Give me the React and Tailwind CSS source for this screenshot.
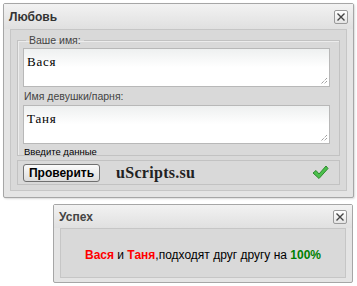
export default function App() {
  const sans = { fontFamily: '"Liberation Sans", Arial, sans-serif' };
  const Close = () => (
    <div className="w-[14px] h-[14px] border border-[#9a9a9a] rounded-[2px] bg-gradient-to-b from-[#ffffff] to-[#e4e4e4] flex items-center justify-center">
      <svg width="10" height="10" viewBox="0 0 10 10">
        <path d="M1.5 1.5 L8.5 8.5 M8.5 1.5 L1.5 8.5" stroke="#444" strokeWidth="1.4" />
      </svg>
    </div>
  );
  const Resize = () => (
    <svg width="9" height="9" viewBox="0 0 9 9" className="absolute right-[1px] bottom-[1px]">
      <path d="M8 2 L2 8 M8 5 L5 8" stroke="#777" strokeWidth="1" strokeDasharray="1 1" />
    </svg>
  );
  const mono = { fontFamily: '"Liberation Serif", "Times New Roman", serif' };
  return (
    <div className="w-[357px] h-[286px] bg-white overflow-hidden flex flex-col" style={sans}>
      <div className="ml-[3px] mt-[3px] w-[351px] h-[195px] border border-[#a6a6a6] rounded-[2px] bg-[#e4e4e4] flex flex-col shadow-[1px_1px_2px_rgba(0,0,0,0.15)]">
        <div className="h-[25px] flex items-center justify-between pl-[5px] pr-[5px] bg-gradient-to-b from-[#f2f2f2] to-[#e0e0e0]">
          <span className="text-[12px] font-bold text-[#333]">Любовь</span>
          <Close />
        </div>
        <div className="mx-[6px] h-[162px] border border-[#c6c6c6] bg-[#d9d9d9] flex flex-col px-[6px] pt-[4px]">
          <fieldset className="border border-[#c2c2c2] shadow-[inset_1px_1px_0_#ececec] px-[5px] pb-[2px] h-[122px]">
            <legend className="text-[10.5px] text-[#444] px-[3px] ml-[3px] leading-[12px]">Ваше имя:</legend>
            <div className="relative mt-[2px] w-[307px] h-[39px] border border-[#b8b8b8] bg-gradient-to-b from-[#eef0f0] via-[#ffffff] to-[#ffffff] to-30%">
              <div className="pl-[3px] pt-[3px] text-[13px] text-black tracking-[0.8px]" style={mono}>Вася</div>
              <Resize />
            </div>
            <div className="text-[10.5px] text-[#444] mt-[3px] leading-[13px] pl-[1px]">Имя девушки/парня:</div>
            <div className="relative mt-[2px] w-[307px] h-[39px] border border-[#b8b8b8] bg-gradient-to-b from-[#eef0f0] via-[#ffffff] to-[#ffffff] to-30%">
              <div className="pl-[3px] pt-[3px] text-[13px] text-black tracking-[0.8px]" style={mono}>Таня</div>
              <Resize />
            </div>
            <div className="text-[9.5px] text-black leading-[13px] mt-[1px] pl-[1px]">Введите данные</div>
          </fieldset>
          <div className="mt-[4px] h-[25px] border border-[#c2c2c2] flex items-center pl-[5px] pr-[10px]">
            <div className="w-[77px] h-[18px] border border-[#707070] rounded-[3px] bg-gradient-to-b from-[#fbfbfb] to-[#dcdcdc] flex items-center justify-center text-[12px] font-bold text-black">Проверить</div>
            <div className="ml-[16px] text-[16px] font-bold text-[#222] tracking-[0.3px]" style={{ fontFamily: '"Liberation Serif", "Times New Roman", serif' }}>uScripts.su</div>
            <div className="flex-1" />
            <svg width="17" height="15" viewBox="0 0 17 15">
              <path d="M1 8 L4 5.5 L7 9 L14 1 L16 3.5 L7 13.5 Z" fill="#4cc04c" stroke="#2e8b2e" strokeWidth="1" strokeLinejoin="round" />
            </svg>
          </div>
        </div>
      </div>
      <div className="ml-[53px] mt-[6px] w-[300px] h-[79px] border border-[#a6a6a6] rounded-[2px] bg-[#e4e4e4] flex flex-col">
        <div className="h-[23px] flex items-center justify-between pl-[5px] pr-[5px] bg-gradient-to-b from-[#f2f2f2] to-[#e0e0e0]">
          <span className="text-[12px] font-bold text-[#444]">Успех</span>
          <Close />
        </div>
        <div className="mx-[6px] h-[50px] border border-[#c6c6c6] bg-[#d9d9d9] flex items-center justify-center text-[12px] text-black">
          <span className="mt-[4px]">
            <b className="text-[#ff0000]">Вася</b> и <b className="text-[#ff0000]">Таня</b>,подходят друг другу на <b className="text-[#008000]">100%</b>
          </span>
        </div>
      </div>
    </div>
  );
}
